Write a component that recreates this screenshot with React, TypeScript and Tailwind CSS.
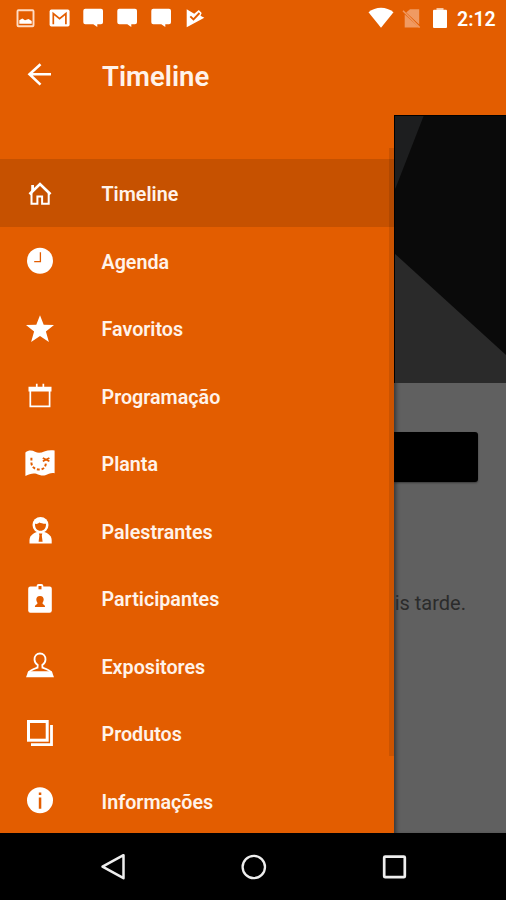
import type { ReactNode } from "react";
import clsx from "clsx";

type MenuItem = {
    label: string;
    icon: ReactNode;
};

const ORANGE = "#e35d00";

const HomeIcon = () => (
    <g fill="none" stroke="#fff">
        <path d="M9.5 20.3L20 10.1l10.5 10.2" strokeWidth="2.7" />
        <path d="M12.6 17v-6" strokeWidth="2.8" />
        <path d="M11.5 19v10.8h5.9v-7.4h4.7v7.4h6.6V19" strokeWidth="2" />
    </g>
);

const ClockIcon = () => (
    <>
        <circle cx="20" cy="19.7" r="13" fill="#fff" />
        <path d="M20.4 11.3v9.4h-6.2" fill="none" stroke={ORANGE} strokeWidth="1.3" />
    </>
);

const StarIcon = () => (
    <path fill="#fff" d="M20 6.3l3.7 9.5 10.3.3-8.1 6.5 3 10.4-8.9-5.900-8.900 5.900 3-10.400L6 16.100l10.300-.3z" />
);

const CalendarIcon = () => (
    <>
        <path fill="#fff" d="M8.5 10.7h23v4.8h-23zM15.900 7.700h1.700v4h-1.700zM22.500 7.700h1.700v4h-1.700z" />
        <path d="M10.3 14.5v15.8h19.3V14.5" fill="none" stroke="#fff" strokeWidth="1.7" />
    </>
);

const MapIcon = () => (
    <>
        <path
            fill="#fff"
            d="M5.400 8.400c3.200-2.400 6.600-2.200 9.600-.6 3.200 1.500 6.200 1 9.200-.3 3.300-1.300 7-1.500 10.400-1v22.700c-3.400-.9-6.200.8-9.300 2-3.200.9-6-.4-9-1.500-3.600-.9-7 .3-10.900 2.300z"
        />
        <path d="M11.4 13.8v4.5c0 5.500 4.500 7.300 8 7.300 4 0 6.500-2.800 6.500-7" fill="none" stroke={ORANGE} strokeWidth="2" strokeDasharray="2.8 1.9" />
        <path d="M22.8 14l6.600 3.200M29.400 14l-6.600 3.200" stroke={ORANGE} strokeWidth="1.8" />
    </>
);

const SpeakerIcon = () => (
    <>
        <circle cx="20.5" cy="14" r="8" fill="#fff" />
        <path fill="#fff" d="M9.500 32.400v-3c0-4.500 3-7 7.500-8.500h7.200c4.500 1.500 7.500 4 7.500 8.500v3z" />
        <path fill={ORANGE} d="M15 12.800c2 .5 3.400-.2 4.300-1.300 1.600.5 4.200 1.500 6.700 1.300.2 4.400-2.100 7-5.500 7s-5.700-2.600-5.500-7z" />
        <path fill={ORANGE} d="M18.900 22.500h3.400l-.5 2 .8 6.300h-4l.8-6.300z" />
    </>
);

const BadgeIcon = () => (
    <>
        <rect x="8.2" y="7.5" width="23.6" height="26.2" rx="2.2" fill="#fff" />
        <rect x="16.7" y="5" width="6.6" height="6" rx="1.8" fill="#fff" />
        <rect x="18.5" y="7" width="3" height="3.3" fill={ORANGE} />
        <path
            fill={ORANGE}
            d="M20 16.900c2.700 0 3.700 1.600 3.700 3.500 0 1.600-.8 2.400-1.200 3.600-.1 1.500 2.600 1.500 2.600 4H14.900c0-2.500 2.700-2.500 2.600-4-.4-1.200-1.200-2-1.200-3.600 0-1.900 1-3.500 3.700-3.500z"
        />
    </>
);

const BustIcon = () => (
    <>
        <path
            fill="none"
            stroke="#fff"
            strokeWidth="1.8"
            d="M8.300 27.500c1-3 4-4.200 9.200-5.800l.2-2.700c-2-1.300-3.200-3-3.200-5.500 0-3.600 2.200-6 5.500-6s5.500 2.400 5.500 6c0 2.500-1.200 4.200-3.200 5.500l.2 2.700c5.200 1.600 8.200 2.800 9.200 5.800"
        />
        <path fill="#fff" d="M8.300 25.300h23.400l2.300 5.900H6z" />
    </>
);

const ProductsIcon = () => (
    <g fill="none" stroke="#fff">
        <rect x="8.5" y="7.5" width="18.7" height="18.7" strokeWidth="3" />
        <path d="M31.500 11v19.600H11" strokeWidth="2.8" />
    </g>
);

const InfoIcon = () => (
    <>
        <circle cx="20" cy="19.3" r="13" fill="#fff" />
        <path fill={ORANGE} d="M18.800 11.500h2.500v2.600h-2.500zM18.800 16.600h2.500v11.200h-2.500z" />
    </>
);

const items: MenuItem[] = [
    { label: "Timeline", icon: <HomeIcon /> },
    { label: "Agenda", icon: <ClockIcon /> },
    { label: "Favoritos", icon: <StarIcon /> },
    { label: "Programação", icon: <CalendarIcon /> },
    { label: "Planta", icon: <MapIcon /> },
    { label: "Palestrantes", icon: <SpeakerIcon /> },
    { label: "Participantes", icon: <BadgeIcon /> },
    { label: "Expositores", icon: <BustIcon /> },
    { label: "Produtos", icon: <ProductsIcon /> },
    { label: "Informações", icon: <InfoIcon /> },
];

function Bubble() {
    return (
        <svg viewBox="0 0 24 24" className="h-6 w-6">
            <path fill="#fff" d="M4.300 2.700h15.700a2 2 0 012 2v11.600a2 2 0 01-2 2h-3.700V21l-4-2.700h-8a2 2 0 01-2-2V4.700a2 2 0 012-2z" />
        </svg>
    );
}

function StatusBar() {
    return (
        <div className="flex h-9 items-center justify-between pl-[13px] pr-[10px]">
            <div className="flex gap-[10px]">
                <svg viewBox="0 0 24 24" className="h-6 w-6">
                    <rect x="4.500" y="4.200" width="16" height="16" rx="1" fill="none" stroke="#ffdcc4" strokeWidth="1.9" />
                    <path fill="#fff" d="M6.300 17.700v-3.500l3-1.700 2.700 1.700 3.500-1.200 3.200 2v2.700z" />
                </svg>
                <svg viewBox="0 0 24 24" className="h-6 w-6">
                    <rect x="2.600" y="3.600" width="20" height="17" rx="1.8" fill="#fff" />
                    <path d="M6.300 18.300V7.500l6.300 5.200 6.300-5.200v10.800" fill="none" stroke={ORANGE} strokeWidth="1.7" />
                </svg>
                <Bubble />
                <Bubble />
                <Bubble />
                <svg viewBox="0 0 24 24" className="h-6 w-6">
                    <path fill="#fff" d="M3.700 3.200l7.500 4.600 4.600-3.800 2.900 3-1.200 2.700 3.800 2L3.700 21.200z" />
                    <path d="M7.300 10.300l3.200 3.200 6-6.500" fill="none" stroke={ORANGE} strokeWidth="1.9" />
                </svg>
            </div>
            <div className="flex items-center">
                <svg viewBox="0 0 26 24" className="h-6 w-[26px]">
                    <path fill="#fff" d="M.5 6.300C7.500.2 18.500.2 25.500 6.300L13 21.700z" />
                </svg>
                <svg viewBox="0 0 20 24" className="ml-2 h-6 w-5">
                    <path fill="#f09a62" d="M8 3.200h9.200v15.300L4.200 6.600zM2.700 8.500l14.500 13H2.700z" />
                    <path d="M1 4.800l16.700 16.700" stroke="#f09a62" strokeWidth="1.5" />
                </svg>
                <svg viewBox="0 0 16 24" className="ml-[10px] h-6 w-4">
                    <rect x="4.500" y="2" width="7" height="3" fill="#f7c6a2" />
                    <rect x="1" y="3.700" width="14" height="18.300" rx="1" fill="#fff" />
                </svg>
                <span className="mt-[3px] ml-[9px] w-[39px] text-[19.5px] leading-8 font-semibold whitespace-nowrap">2:12</span>
            </div>
        </div>
    );
}

function Drawer() {
    return (
        <nav className="relative z-10 h-full w-[394px] shrink-0 overflow-hidden bg-[#e35d00] pt-[44.5px]">
            {items.map((item, i) => (
                <div
                    key={item.label}
                    className={clsx("flex h-[67.5px] items-center pl-5", i === 0 && "bg-[#c65100]")}
                >
                    <svg viewBox="0 0 40 40" className="mt-[2px] h-10 w-10 shrink-0">
                        {item.icon}
                    </svg>
                    <span className="mt-[4.5px] ml-[41.5px] text-[19.7px] font-semibold text-[#fff3ea]">{item.label}</span>
                </div>
            ))}
            {/* scrollbar */}
            <div className="absolute top-[33px] right-0 h-[608px] w-[5px] bg-black/10" />
        </nav>
    );
}

function Page() {
    return (
        <main className="flex-1 overflow-hidden bg-[#606060] shadow-[inset_4px_0_4px_-2px_rgba(0,0,0,0.45)]">
            <svg viewBox="0 0 112 268" className="block h-[268px] w-full">
                <path fill="#0a0a0a" d="M0 0h112v268H0z" />
                <path fill="#1d1e1f" d="M0 0h30L2 72l-2 4z" />
                <path fill="#2a2a2a" d="M0 138l112 102v28H0z" />
                <path d="M0 .5h112M.5 0v268" stroke="#000" />
            </svg>
            <div className="mt-[49px] mr-[28px] h-[50px] rounded-r-[3px] bg-black shadow-[0_1px_2px_rgba(0,0,0,0.4)]" />
            <div className="mt-[107px] flex justify-end pr-[40px]">
                <p className="text-[20px] leading-7 whitespace-nowrap text-[#2b2b2b]">mais tarde.</p>
            </div>
        </main>
    );
}

export default function App() {
    return (
        <div className="flex h-[900px] w-[506px] flex-col overflow-hidden bg-[#e35d00] font-[Roboto,sans-serif] text-white">
            <StatusBar />
            <header className="flex h-[78.5px] shrink-0 items-start">
                <svg viewBox="0 0 40 40" className="mt-[18px] ml-5 h-10 w-10">
                    <path d="M31 20.300H9.500M20.500 10.300L9.500 20.300l11 10.300" fill="none" stroke="#fff" strokeWidth="2.6" />
                </svg>
                <h1 className="mt-[21px] ml-[42px] text-[27.5px] leading-10 font-semibold text-[#fff3ea]">Timeline</h1>
            </header>
            <div className="flex h-[718.5px] shrink-0">
                <Drawer />
                <Page />
            </div>
            <footer className="flex flex-1 items-center bg-black pl-[42px]">
                <div className="flex w-[141px] justify-center">
                    <svg viewBox="0 0 30 30" className="h-[30px] w-[30px]">
                        <path d="M25.500 3.200v23L4.500 14.700z" fill="none" stroke="#eee" strokeWidth="2.5" strokeLinejoin="round" />
                    </svg>
                </div>
                <div className="flex w-[141px] justify-center">
                    <svg viewBox="0 0 30 30" className="h-[30px] w-[30px]">
                        <circle cx="14.8" cy="15" r="11.2" fill="none" stroke="#eee" strokeWidth="2.3" />
                    </svg>
                </div>
                <div className="flex w-[141px] justify-center">
                    <svg viewBox="0 0 30 30" className="h-[30px] w-[30px]">
                        <rect x="4.2" y="4.6" width="20.6" height="20.6" rx="1" fill="none" stroke="#eee" strokeWidth="2.7" />
                    </svg>
                </div>
            </footer>
        </div>
    );
}
